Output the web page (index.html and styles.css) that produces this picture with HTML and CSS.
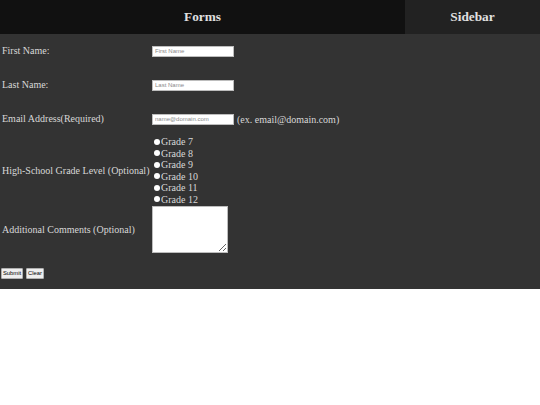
FILE: index.html
```html
<!DOCTYPE html>
<html>
<head>
<meta charset="utf-8">
<title>Forms</title>
<link rel="stylesheet" href="styles.css">
</head>
<body>
<div class="topbar">
  <div class="topbar-main">Forms</div>
  <div class="topbar-side">Sidebar</div>
</div>
<form class="form-area">
  <div class="row">
    <label class="row-label">First Name:</label>
    <input class="text-input" type="text" placeholder="First Name">
  </div>
  <div class="row">
    <label class="row-label">Last Name:</label>
    <input class="text-input" type="text" placeholder="Last Name">
  </div>
  <div class="row">
    <label class="row-label">Email Address(Required)</label>
    <input class="text-input" type="email" placeholder="name@domain.com">
    <span class="hint">(ex. email@domain.com)</span>
  </div>
  <div class="row">
    <label class="row-label">High-School Grade Level (Optional)</label>
    <div class="radio-group">
      <label class="radio-option"><input class="radio" type="radio" name="grade">Grade 7</label>
      <label class="radio-option"><input class="radio" type="radio" name="grade">Grade 8</label>
      <label class="radio-option"><input class="radio" type="radio" name="grade">Grade 9</label>
      <label class="radio-option"><input class="radio" type="radio" name="grade">Grade 10</label>
      <label class="radio-option"><input class="radio" type="radio" name="grade">Grade 11</label>
      <label class="radio-option"><input class="radio" type="radio" name="grade">Grade 12</label>
    </div>
  </div>
  <div class="row row-comments">
    <label class="row-label">Additional Comments (Optional)</label>
    <textarea class="comments"></textarea>
  </div>
  <div class="row row-actions">
    <button class="btn" type="submit">Submit</button>
    <button class="btn" type="reset">Clear</button>
  </div>
</form>
</body>
</html>
```

FILE: styles.css
```css
html, body {
  margin: 0;
  padding: 0;
  background: #ffffff;
}

body {
  font-family: "Liberation Serif", "Times New Roman", serif;
  font-size: 10px;
  color: #d8d8d8;
}

.topbar {
  display: flex;
  height: 34px;
}

.topbar-main,
.topbar-side {
  display: flex;
  align-items: center;
  justify-content: center;
  font-weight: bold;
  font-size: 13.3px;
  color: #e0e0e0;
}

.topbar-main {
  flex: 0 0 405px;
  background: #111111;
}

.topbar-side {
  flex: 1;
  background: #222222;
}

.form-area {
  display: block;
  margin: 0;
  background: #333333;
}

.row {
  display: flex;
  align-items: center;
  min-height: 34px;
}

.row-label {
  flex: 0 0 150px;
  padding-left: 2px;
  line-height: 12px;
}

.text-input {
  box-sizing: border-box;
  width: 82px;
  height: 11px;
  margin: 0;
  padding: 0 2px;
  border: 1px solid #bdbdbd;
  background: #ffffff;
  font-family: "Liberation Sans", Arial, sans-serif;
  font-size: 6px;
  color: #222;
  outline: none;
}

.text-input::placeholder {
  color: #8a8a8a;
}

.hint {
  margin-left: 3px;
}

.radio-group {
  display: flex;
  flex-direction: column;
}

.radio-option {
  display: flex;
  align-items: center;
  height: 11.5px;
  line-height: 11.5px;
}

.radio {
  appearance: none;
  -webkit-appearance: none;
  width: 6px;
  height: 6px;
  margin: 0 1px 0 2px;
  border-radius: 50%;
  background: #ffffff;
  border: none;
}

.row-comments {
  padding: 1px 0 5px;
}

.comments {
  box-sizing: border-box;
  display: block;
  width: 76px;
  height: 47px;
  margin: 0;
  border: 1px solid #bdbdbd;
  background: #ffffff;
}

.row-actions {
  min-height: 31px;
  padding-left: 1px;
  gap: 3px;
}

.btn {
  box-sizing: border-box;
  height: 11px;
  margin: 0;
  padding: 0 1px;
  border: 1px solid #b0b0b0;
  border-radius: 1px;
  background: #efefef;
  font-family: "Liberation Sans", Arial, sans-serif;
  font-size: 5.8px;
  color: #000;
  line-height: 9px;
}
```
